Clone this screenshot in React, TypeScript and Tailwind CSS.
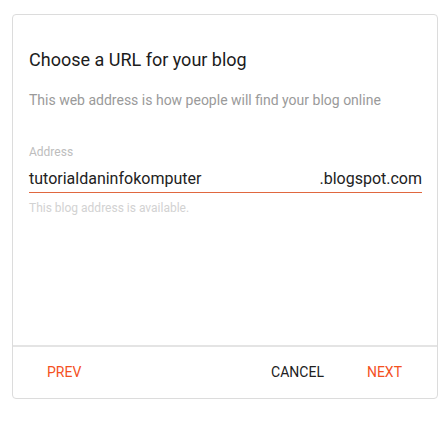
import React from "react";

export default function App() {
  return (
    <div
      className="w-[448px] h-[423px] bg-white pt-[14px] pl-[12px]"
      style={{ fontFamily: "Roboto, 'Liberation Sans', sans-serif" }}
    >
      <div className="w-[426px] h-[385px] border border-[#dcdcdc] rounded-[4px] flex flex-col bg-white">
        <div className="flex-1 pl-[16px] pr-[15px] pt-[33px]">
          <h1 className="text-[18px] leading-[24px] font-normal text-[#1c1c1c]">
            Choose a URL for your blog
          </h1>
          <p className="mt-[18px] text-[14px] leading-[20px] text-[#9a9a9a]">
            This web address is how people will find your blog online
          </p>
          <div className="mt-[34px] text-[12px] leading-[16px] text-[#bdbdbd]">Address</div>
          <div className="mt-[7px] flex justify-between items-end text-[16px] leading-[24px] text-[#222] border-b border-[#e0673f] pb-[1px] w-[393px]">
            <span>tutorialdaninfokomputer</span>
            <span>.blogspot.com</span>
          </div>
          <div className="mt-[7px] text-[12px] leading-[16px] text-[#d2d2d2]">
            This blog address is available.
          </div>
        </div>
        <div className="h-[53px] border-t-2 border-[#e4e4e4] flex items-center pl-[18px] pr-[20px]">
          <button className="min-w-[64px] h-[36px] px-[16px] text-[14px] font-normal text-[#f4511e]">
            PREV
          </button>
          <div className="flex-1" />
          <button className="min-w-[64px] h-[36px] px-[16px] text-[14px] font-normal text-[#212121]">
            CANCEL
          </button>
          <button className="ml-[12px] min-w-[64px] h-[36px] px-[15px] text-[14px] font-normal text-[#f4511e]">
            NEXT
          </button>
        </div>
      </div>
    </div>
  );
}
